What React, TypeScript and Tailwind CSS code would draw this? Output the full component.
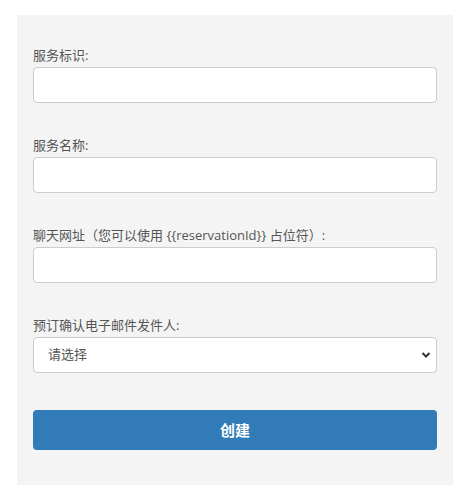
import React from "react";

const font = { fontFamily: '"Open Sans", "Noto Sans CJK SC", sans-serif' };

function Field({ label }: { label: string }) {
  return (
    <div className="flex flex-col gap-[2px]">
      <label className="text-[13px] leading-[20px] text-[#555]">{label}</label>
      <input
        type="text"
        className="h-[36px] w-full rounded-[4px] border border-[#ccc] bg-white px-3 text-[13px] text-[#555] outline-none"
      />
    </div>
  );
}

export default function App() {
  return (
    <div className="bg-white pt-[15px] px-[17px] pb-[19px]" style={font}>
      <div className="flex w-[436px] flex-col bg-[#f4f4f4] px-[16px] pt-[30px] pb-[35px]">
        <div className="flex flex-col gap-[32px]">
          <Field label="服务标识:" />
          <Field label="服务名称:" />
          <Field label="聊天网址（您可以使用 {{reservationId}} 占位符）:" />
          <div className="flex flex-col gap-[2px]">
            <label className="text-[13px] leading-[20px] text-[#555]">预订确认电子邮件发件人:</label>
            <div className="relative h-[36px] w-full rounded-[4px] border border-[#ccc] bg-white">
              <div className="flex h-full items-center pl-[14px] text-[13px] text-[#555]">请选择</div>
              <svg
                className="absolute right-[5px] top-[13px]"
                width="10"
                height="8"
                viewBox="0 0 10 8"
                fill="none"
              >
                <path d="M1.5 2 L5 5.5 L8.5 2" stroke="#333" strokeWidth="2" />
              </svg>
            </div>
          </div>
        </div>
        <button className="mt-[37px] flex h-[40px] w-full items-center justify-center rounded-[4px] bg-[#317bb8] text-[15px] font-bold text-white">
          创建
        </button>
      </div>
    </div>
  );
}
